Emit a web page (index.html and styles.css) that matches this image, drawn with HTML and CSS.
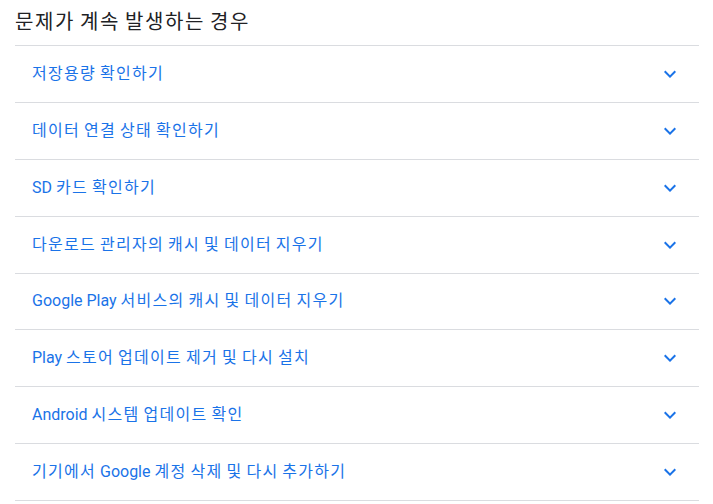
FILE: index.html
```html
<!DOCTYPE html>
<html lang="ko">
<head>
<meta charset="utf-8">
<link rel="stylesheet" href="styles.css">
<title>문제가 계속 발생하는 경우</title>
</head>
<body>
<section class="faq">
  <h2 class="faq-title">문제가 계속 발생하는 경우</h2>
  <ul class="faq-list">
    <li class="faq-item"><span class="faq-label">저장용량 확인하기</span><svg class="chev" viewBox="0 0 24 24"><path d="M16.59 8.59L12 13.17 7.41 8.59 6 10l6 6 6-6z"/></svg></li>
    <li class="faq-item"><span class="faq-label">데이터 연결 상태 확인하기</span><svg class="chev" viewBox="0 0 24 24"><path d="M16.59 8.59L12 13.17 7.41 8.59 6 10l6 6 6-6z"/></svg></li>
    <li class="faq-item"><span class="faq-label"><span class="lat">SD</span> 카드 확인하기</span><svg class="chev" viewBox="0 0 24 24"><path d="M16.59 8.59L12 13.17 7.41 8.59 6 10l6 6 6-6z"/></svg></li>
    <li class="faq-item"><span class="faq-label">다운로드 관리자의 캐시 및 데이터 지우기</span><svg class="chev" viewBox="0 0 24 24"><path d="M16.59 8.59L12 13.17 7.41 8.59 6 10l6 6 6-6z"/></svg></li>
    <li class="faq-item"><span class="faq-label"><span class="lat">Google Play</span> 서비스의 캐시 및 데이터 지우기</span><svg class="chev" viewBox="0 0 24 24"><path d="M16.59 8.59L12 13.17 7.41 8.59 6 10l6 6 6-6z"/></svg></li>
    <li class="faq-item"><span class="faq-label"><span class="lat">Play</span> 스토어 업데이트 제거 및 다시 설치</span><svg class="chev" viewBox="0 0 24 24"><path d="M16.59 8.59L12 13.17 7.41 8.59 6 10l6 6 6-6z"/></svg></li>
    <li class="faq-item"><span class="faq-label"><span class="lat">Android</span> 시스템 업데이트 확인</span><svg class="chev" viewBox="0 0 24 24"><path d="M16.59 8.59L12 13.17 7.41 8.59 6 10l6 6 6-6z"/></svg></li>
    <li class="faq-item"><span class="faq-label">기기에서 <span class="lat">Google</span> 계정 삭제 및 다시 추가하기</span><svg class="chev" viewBox="0 0 24 24"><path d="M16.59 8.59L12 13.17 7.41 8.59 6 10l6 6 6-6z"/></svg></li>
  </ul>
</section>
</body>
</html>
```

FILE: styles.css
```css
html, body {
  margin: 0;
  padding: 0;
  background: #ffffff;
}
body {
  font-family: Roboto, "Noto Sans CJK KR", sans-serif;
}
.faq {
  margin: 0 14px 0 15px;
}
.faq-title {
  margin: 0;
  padding: 8px 0 9px;
  font-size: 20px;
  line-height: 28px;
  font-weight: 400;
  color: #202124;
  letter-spacing: 0.08em;
  word-spacing: -0.08em;
  border-bottom: 1px solid #dadce0;
}
.faq-list {
  list-style: none;
  margin: 0;
  padding: 0;
}
.faq-item {
  display: flex;
  align-items: center;
  justify-content: space-between;
  height: 55.875px;
  padding: 0 17px 0 17px;
  border-bottom: 1px solid #dadce0;
}
.faq-label {
  font-size: 16px;
  line-height: 24px;
  color: #1a73e8;
  letter-spacing: 0.08em;
  word-spacing: -0.08em;
}
.lat {
  letter-spacing: 0;
  word-spacing: 0;
}
.chev {
  width: 24px;
  height: 24px;
  fill: #1a73e8;
  flex: none;
}
```
